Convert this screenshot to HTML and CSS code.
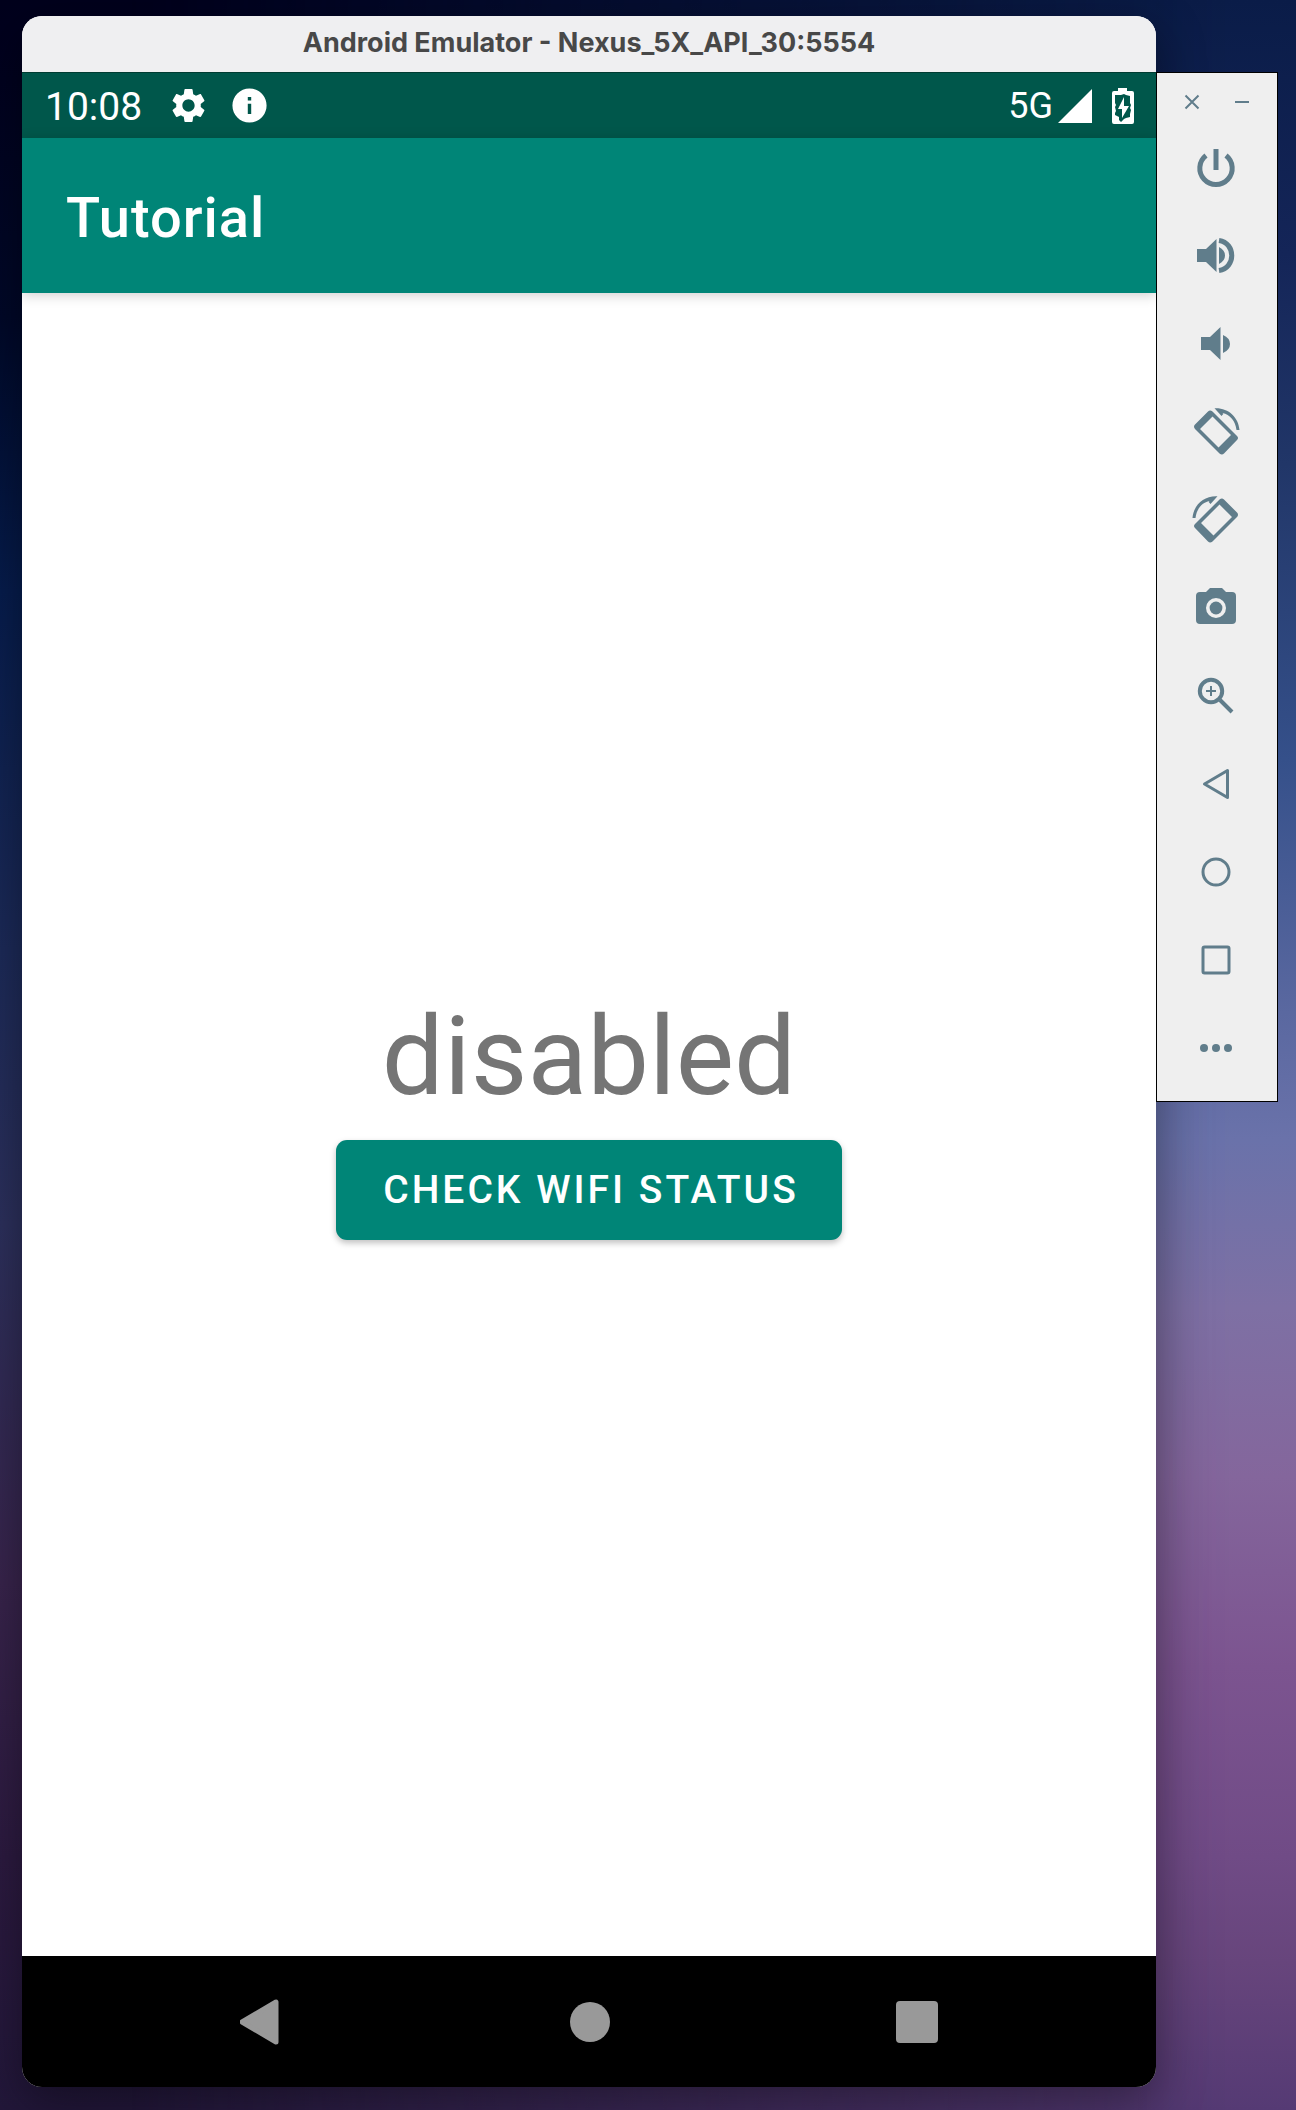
FILE: index.html
```html
<!DOCTYPE html>
<html lang="en">
<head>
<meta charset="utf-8">
<meta name="viewport" content="width=device-width, initial-scale=1">
<title>Android Emulator</title>
<link rel="stylesheet" href="styles.css">
</head>
<body>
<main class="emulator">
  <header class="titlebar">Android Emulator - Nexus_5X_API_30:5554</header>
  <div class="statusbar">
    <time class="clock">10:08</time>
    <svg class="status-icon gear" viewBox="0 0 24 24" aria-hidden="true"><path d="M19.14 12.94c.04-.3.06-.61.06-.94 0-.32-.02-.64-.07-.94l2.03-1.58c.18-.14.23-.41.12-.61l-1.92-3.32c-.12-.22-.37-.29-.59-.22l-2.39.96c-.5-.38-1.03-.7-1.62-.94l-.36-2.54c-.04-.24-.24-.41-.48-.41h-3.84c-.24 0-.43.17-.47.41l-.36 2.54c-.59.24-1.13.57-1.62.94l-2.39-.96c-.22-.08-.47 0-.59.22L2.74 8.87c-.12.21-.08.47.12.61l2.03 1.58c-.05.3-.09.63-.09.94s.02.64.07.94l-2.03 1.58c-.18.14-.23.41-.12.61l1.92 3.32c.12.22.37.29.59.22l2.39-.96c.5.38 1.03.7 1.62.94l.36 2.54c.05.24.24.41.48.41h3.84c.24 0 .44-.17.47-.41l.36-2.54c.59-.24 1.13-.56 1.62-.94l2.39.96c.22.08.47 0 .59-.22l1.92-3.32c.12-.22.07-.47-.12-.61l-2.01-1.58zM12 15.6c-1.98 0-3.6-1.62-3.6-3.6s1.62-3.6 3.6-3.6 3.6 1.62 3.6 3.6-1.62 3.6-3.6 3.6z"/></svg>
    <svg class="status-icon" viewBox="0 0 24 24" aria-hidden="true"><path d="M12 2C6.48 2 2 6.48 2 12s4.480 10 10 10 10-4.480 10-10S17.520 2 12 2zm1 15h-2v-6h2v6zm0-8h-2V7h2v2z"/></svg>
    <span class="network">5G</span>
    <svg class="signal" viewBox="0 0 34 34" aria-hidden="true"><path d="M0 34L34 0V34z"/></svg>
    <svg class="battery" viewBox="0 0 22 36" aria-hidden="true"><path fill-rule="evenodd" d="M6 0h9v3h5q2 0 2 2v29q0 2-2 2H2q-2 0-2-2V5q0-2 2-2h4zM3 7v8l1 2-1 2 1 4-1 2v2l4 2v3l2 2 3-3 2-1 4-1v-3l1-4-1-2 1-3-1-2V8l-4-1-2-1-3 1zM12 9v9h5l-7 12v-9H6z"/></svg>
  </div>
  <div class="appbar"><h1 class="app-title">Tutorial</h1></div>
  <section class="content">
    <output class="wifi-state" id="wifi-state">disabled</output>
    <button class="check-button" type="button">CHECK WIFI STATUS</button>
  </section>
  <nav class="navbar" aria-label="System navigation">
    <button class="nav-button" type="button" aria-label="Back"><svg width="44" height="46" viewBox="0 0 44 46"><path d="M2 23L36 3V43z" stroke-width="5" stroke-linejoin="round"/></svg></button>
    <button class="nav-button" type="button" aria-label="Home"><svg width="40" height="46" viewBox="0 0 40 46"><circle cx="20" cy="23" r="20"/></svg></button>
    <button class="nav-button" type="button" aria-label="Overview"><svg width="42" height="46" viewBox="0 0 42 46"><rect y="2" width="42" height="42" rx="4"/></svg></button>
  </nav>
</main>
<aside class="toolbar" aria-label="Emulator controls">
  <div class="window-controls">
    <button class="window-button" type="button" aria-label="Close"><svg width="16" height="16" viewBox="0 0 16 16"><path class="line fine" d="M1.500 1.500L14.500 14.500M14.500 1.500L1.500 14.500"/></svg></button>
    <button class="window-button" type="button" aria-label="Minimize"><svg width="16" height="16" viewBox="0 0 16 16"><path class="line fine" d="M1 8H15"/></svg></button>
  </div>
  <button class="tool" type="button" aria-label="Power"><svg viewBox="0 0 50 50"><path class="line thick" d="M25 6V27M15 12.500A16.200 16.200 0 1 0 35 12.500"/></svg></button>
  <button class="tool" type="button" aria-label="Volume up"><svg viewBox="0 0 50 50"><path d="M6 18h9L25.500 8v33L15 31H6zM28 16q6 3 6 8.500t-6 8.500z"/><path class="line thick" d="M28 9.500C45 12 45 37 28 39.500"/></svg></button>
  <button class="tool" type="button" aria-label="Volume down"><svg viewBox="0 0 50 50"><path d="M10 18h9L29.500 8v33L19 31h-9zM32 16q7 3 7 9t-7 9z"/></svg></button>
  <button class="tool" type="button" aria-label="Rotate left"><svg viewBox="0 0 50 50"><path fill-rule="evenodd" d="M17 4.500q2-2 4.500 0L46 29q2 2 0 4L33 46.500q-2 2-4.500 0L4 22q-2-2.500 0-4.500zM21.500 9.500L9 22l18.500 18.500L40 28z"/><path d="M23.500 1.300C37 .5 47.500 10 48.500 23h-3C44.500 14 39 7.500 31.500 6l.8 1-1.800 2z"/></svg></button>
  <button class="tool" type="button" aria-label="Rotate right"><svg viewBox="0 0 50 50"><g transform="matrix(-1 0 0 1 50 0)"><path fill-rule="evenodd" d="M17 4.500q2-2 4.500 0L46 29q2 2 0 4L33 46.500q-2 2-4.500 0L4 22q-2-2.500 0-4.500zM21.500 9.500L9 22l18.500 18.500L40 28z"/><path d="M23.500 1.300C37 .5 47.500 10 48.500 23h-3C44.500 14 39 7.500 31.500 6l.8 1-1.800 2z"/></g></svg></button>
  <button class="tool" type="button" aria-label="Take screenshot"><svg viewBox="0 0 50 50"><path fill-rule="evenodd" d="M19 5h12l4 4h6q4 0 4 4v24q0 4-4 4H9q-4 0-4-4V13q0-4 4-4h6zM25 15a10 10 0 1 0 0 20 10 10 0 1 0 0-20z"/><circle cx="25" cy="25" r="6.400"/></svg></button>
  <button class="tool" type="button" aria-label="Zoom"><svg viewBox="0 0 50 50"><circle class="line medium" cx="20" cy="20" r="11.200"/><path class="line medium" d="M29 29L41 41"/><path class="line fine" d="M20 15V25M15 20H25"/></svg></button>
  <button class="tool" type="button" aria-label="Back"><svg viewBox="0 0 50 50"><path class="line" stroke-linejoin="round" d="M13.500 25L36.500 11.500V38.500z"/></svg></button>
  <button class="tool" type="button" aria-label="Home"><svg viewBox="0 0 50 50"><circle class="line" cx="25" cy="25" r="13"/></svg></button>
  <button class="tool" type="button" aria-label="Overview"><svg viewBox="0 0 50 50"><rect class="line" x="12" y="12" width="26" height="26" rx="1.500"/></svg></button>
  <button class="tool" type="button" aria-label="More"><svg viewBox="0 0 50 50"><circle cx="13" cy="25" r="4"/><circle cx="25" cy="25" r="4"/><circle cx="37" cy="25" r="4"/></svg></button>
</aside>
</body>
</html>
```
FILE: styles.css
```css
* {
  box-sizing: border-box;
}

body {
  position: relative;
  display: flex;
  align-items: flex-start;
  min-height: 100vh;
  margin: 0;
  padding: 16px 18px 23px 22px;
  font-family: Roboto, "Liberation Sans", sans-serif;
  background: linear-gradient(#00001c 0%, #000828 15%, #061c4c 28%, #1c2a58 45%, #2c305c 58%, #38244c 75%, #2c1a40 88%, #22173a 100%);
}

/* Brighter right half of the wallpaper, faded in across the page */
body::before {
  content: "";
  position: absolute;
  inset: 0;
  background: linear-gradient(#0a1c48 0%, #142558 12%, #213668 22%, #35508a 36%, #5a68a0 48%, #6a72aa 54%, #7e70a4 62%, #84669c 70%, #7c5490 79%, #704b86 88%, #67457c 93%, #553a74 100%);
  mask-image: linear-gradient(to right, transparent 10%, #000 95%);
}

button {
  display: flex;
  align-items: center;
  justify-content: center;
  padding: 0;
  border: 0;
  background: none;
  font: inherit;
  color: inherit;
}

.emulator {
  position: relative;
  display: flex;
  flex: 1;
  flex-direction: column;
  align-self: stretch;
  overflow: hidden;
  border-radius: 20px;
  background: #fff;
  box-shadow: 0 16px 48px rgba(0, 0, 0, 0.4);
}

.titlebar {
  height: 57px;
  border-bottom: 1px solid #003c32;
  background: #efeff1;
  color: #484848;
  font-family: Inter, "Liberation Sans", sans-serif;
  font-size: 27px;
  font-weight: 700;
  line-height: 54px;
  text-align: center;
}

.statusbar {
  display: flex;
  align-items: center;
  height: 65px;
  padding: 0 22px 0 23px;
  background: #00574b;
  color: #fff;
  fill: #fff;
}

.clock {
  margin-right: 26px;
  padding-top: 2px;
  font-size: 39px;
}

.status-icon {
  width: 41px;
  height: 41px;
}

.gear {
  margin-right: 20px;
}

.network {
  margin-left: auto;
  font-size: 36px;
}

.signal {
  width: 34px;
  height: 34px;
  margin: 0 20px 0 5px;
}

.battery {
  width: 22px;
  height: 36px;
}

.appbar {
  display: flex;
  align-items: center;
  height: 155px;
  padding: 4px 44px 0;
  background: #008577;
  color: #fff;
  box-shadow: 0 2px 12px rgba(0, 0, 0, 0.2);
}

.app-title {
  margin: 0;
  font-size: 56px;
  font-weight: 500;
  letter-spacing: 1px;
}

.content {
  display: flex;
  flex: 1;
  flex-direction: column;
  align-items: center;
  justify-content: center;
  gap: 10px;
  padding-bottom: 25px;
}

.wifi-state {
  color: #757575;
  font-size: 110px;
  line-height: 146px;
}

.check-button {
  height: 100px;
  padding: 0 43px 0 47px;
  border-radius: 11px;
  background: #008577;
  box-shadow: 0 3px 6px rgba(0, 0, 0, 0.25);
  color: #fff;
  font-size: 39px;
  font-weight: 500;
  letter-spacing: 3px;
}

.navbar {
  display: flex;
  justify-content: center;
  gap: 286px;
  height: 131px;
  background: #000;
}

.nav-button svg {
  fill: #999;
  stroke: #999;
  stroke-width: 0;
}

.toolbar {
  position: relative;
  width: 122px;
  margin-top: 56px;
  padding-bottom: 9px;
  border: 1px solid #000;
  background: #efefef;
  fill: #607d8b;
}

.window-controls {
  display: flex;
  justify-content: center;
  height: 51px;
}

.window-button {
  width: 50px;
  padding-top: 6px;
}

.tool {
  width: 100%;
  height: 88px;
  padding-right: 2px;
}

.tool svg {
  width: 50px;
  height: 50px;
}

.line {
  fill: none;
  stroke: #607d8b;
  stroke-width: 3px;
}

.thick {
  stroke-width: 5px;
}

.medium {
  stroke-width: 4px;
}

.fine {
  stroke-width: 2px;
}
```
